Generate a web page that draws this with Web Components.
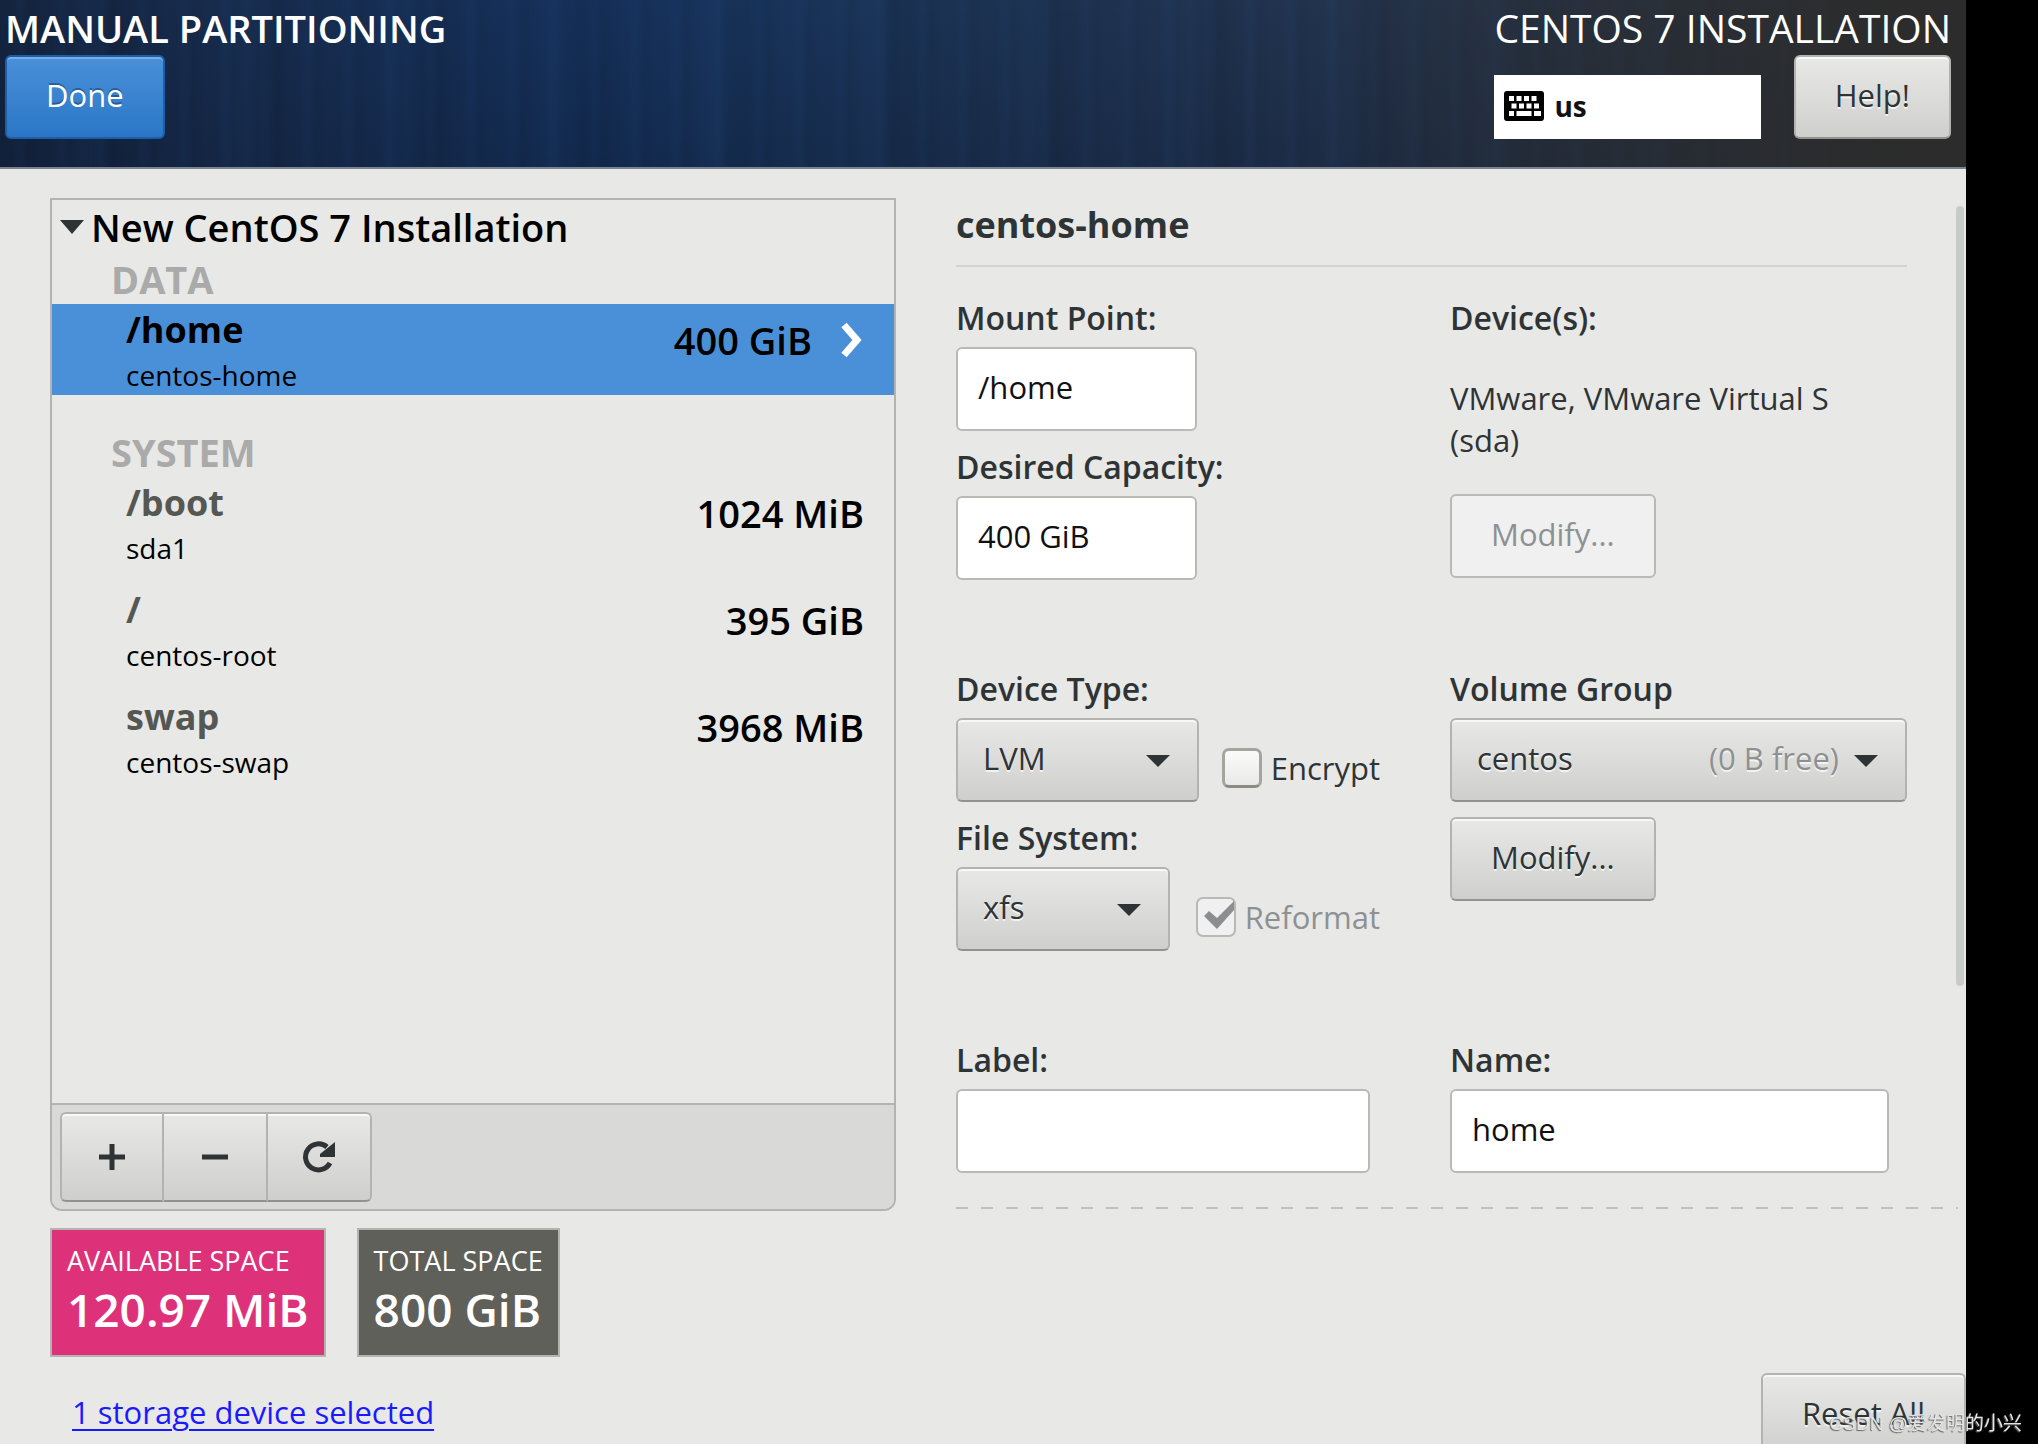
<!DOCTYPE html>
<html lang="en">
<head>
<meta charset="utf-8">
<title>Manual Partitioning</title>
<style>
*{box-sizing:border-box}
html{background:#000}
body{margin:0;min-height:100vh;overflow:hidden;background:#000;font-family:"Open Sans","Noto Sans",sans-serif;font-size:31px;line-height:42px;color:#2e3436}
</style>
</head>
<body>
<install-page></install-page>
<script>
const BASE = `*{box-sizing:border-box}button,input,select{font:inherit;color:inherit;margin:0}`;
const FACE = `border:2px solid #b3b3b0;border-bottom-color:#93938d;border-radius:6px;background:linear-gradient(#e8e8e6,#cfcfcd);box-shadow:inset 0 2px #f8f8f7;text-shadow:0 2px rgba(255,255,255,.7);`;
const LABEL = `label,.caption{display:block;margin-bottom:8px;font-size:32px;font-weight:600;white-space:nowrap}`;
let uid = 0;
function define(name, render) {
  customElements.define(name, class extends HTMLElement {
    connectedCallback() {
      if (this.shadowRoot) return;
      const t = document.createElement('template');
      t.innerHTML = render(a => this.getAttribute(a) || '', a => this.hasAttribute(a), 'f' + (++uid));
      this.attachShadow({mode: 'open'}).append(t.content.cloneNode(true));
    }
  });
}

define('push-button', (a, has) => `<style>${BASE}
:host{display:block;width:max-content}
button{display:block;height:84px;padding:0 39px 4px;white-space:nowrap;color:#2e3436;${FACE}}
:host([primary]) button{color:#fff;border-color:#1c5ea8;background:linear-gradient(#4a90d9,#2a76c6);box-shadow:inset 0 2px #79ade3;text-shadow:0 -2px rgba(0,0,0,.3)}
button:disabled{color:#8e9192;background:#f0f0f0;border-color:#b9b9b5;box-shadow:none;text-shadow:none}
</style><button type="button" ${has('disabled') ? 'disabled' : ''}><slot></slot></button>`);

define('text-field', (a, has, id) => `<style>${BASE}${LABEL}
:host{display:block}
input{display:block;width:100%;height:84px;padding:0 20px 4px;border:2px solid #b9b9b5;border-radius:6px;background:#fff;color:#111;outline:0}
</style><label for="${id}">${a('label')}</label><input id="${id}" type="text" value="${a('value')}">`);

define('select-field', (a, has, id) => `<style>${BASE}${LABEL}
:host{display:block}
.box{display:grid}
.box>*{grid-area:1/1}
select{appearance:none;width:100%;height:84px;padding:0 25px 4px;${FACE}}
.deco{display:flex;align-items:center;justify-content:flex-end;gap:15px;padding:0 29px 4px 0;pointer-events:none;color:#8e9192;text-shadow:0 2px rgba(255,255,255,.7)}
svg{width:24px;height:12px;margin-top:6px;fill:#2e3436}
</style><label for="${id}">${a('label')}</label><div class="box"><select id="${id}"><option>${a('value')}</option></select>
<div class="deco"><slot></slot><svg viewBox="0 0 24 12"><path d="M0 0h24L12 12z"/></svg></div></div>`);

define('check-field', (a, has, id) => `<style>${BASE}
:host{display:block}
label{display:flex;align-items:center;gap:9px}
.tick{display:grid}
.tick>*{grid-area:1/1}
input{appearance:none;width:40px;height:40px;border:3px solid #a5a59f;border-bottom-color:#8c8c84;border-radius:7px;background:linear-gradient(#fafafa,#e9e9e8)}
input:disabled{border:2px solid #b9b9b5;background:#f0f0f0}
svg{width:40px;height:40px;fill:#8b8e8f;pointer-events:none}
:host([disabled]){color:#8e9192}
</style><label for="${id}"><span class="tick"><input id="${id}" type="checkbox" ${has('checked') ? 'checked' : ''} ${has('disabled') ? 'disabled' : ''}>${has('checked') ? '<svg viewBox="0 0 40 40"><path d="M8 19l5-5 8 7L38 4v9L21 32z"/></svg>' : ''}</span><span><slot></slot></span></label>`);

define('page-header', () => `<style>${BASE}
:host{display:flex;justify-content:space-between;align-items:flex-start;height:169px;padding:5px 15px 0 5px;color:#fff;border-bottom:2px solid #7c8290;
background:
linear-gradient(90deg,rgba(44,44,44,0) 66%,#2c2c2c 97%),
repeating-linear-gradient(90deg,rgba(40,90,150,0) 0 12px,rgba(40,90,150,.05) 18px 22px,rgba(0,0,0,.03) 29px 33px,rgba(0,0,0,0) 41px),
repeating-linear-gradient(90deg,rgba(40,90,150,0) 0 60px,rgba(40,90,150,.05) 80px 91px,rgba(0,0,0,.05) 110px 121px,rgba(0,0,0,0) 157px),
linear-gradient(rgba(10,20,40,0),rgba(10,20,40,.25)),
linear-gradient(90deg,#14243f 0,#172c4e 12%,#15305a 30%,#18335b 38%,#1c3252 50%,#22334e 68%,#28323f 100%)}
h1,h2{margin:0 0 4px;font-size:38px;line-height:46px;font-weight:600}
h2{font-size:39px;font-weight:400}
.row{display:flex;align-items:flex-end;justify-content:space-between;gap:32px}
.kb{display:flex;align-items:center;gap:10px;width:267px;height:64px;padding:0 10px 2px;background:#fff;color:#111;font-weight:700;font-size:28px}
svg{width:40px;height:30px;display:block}
</style>
<div><h1>MANUAL PARTITIONING</h1><push-button primary>Done</push-button></div>
<div><h2>CENTOS 7 INSTALLATION</h2><div class="row"><div class="kb">
<svg viewBox="0 0 40 30"><rect width="40" height="30" rx="3"/><path fill="#fff" d="M5 5h5v5H5zM12.500 5h5v5h-5zM20 5h5v5h-5zM27.500 5h5v5h-5zM7.500 12.500h5v5h-5zM15 12.500h5v5h-5zM22.500 12.500h5v5h-5zM30 12.500h5v5h-5zM5 20h5v5H5zM12.500 20h15v5h-15zM30 20h7v5h-7z"/></svg><span>us</span></div><push-button>Help!</push-button></div></div>`);

define('partition-row', (a, has) => `<style>${BASE}
:host{display:flex;justify-content:space-between;height:91px;margin-bottom:16px;padding:0 30px 0 74px;color:#000}
.name{font-size:36px;line-height:52px;font-weight:700;color:#555753}
.dev{font-size:28px;line-height:38px}
.size{display:flex;align-items:center;gap:28px;height:71px;font-size:38px;font-weight:600}
:host([selected]){background:#4a90d9}
:host([selected]) .name{color:#000}
svg{width:24px;height:36px;fill:none;stroke:#fff;stroke-width:7}
</style><div><div class="name">${a('name')}</div><div class="dev">${a('device')}</div></div>
<div class="size"><slot></slot>${has('selected') ? '<svg viewBox="0 0 24 36"><path d="M4 3l13 15L4 33"/></svg>' : ''}</div>`);

define('partition-list', () => `<style>${BASE}
:host{display:flex;flex-direction:column;min-height:1013px;border:2px solid #b3b3b0;border-radius:0 0 12px 12px}
.tree{flex:1}
h2{display:flex;align-items:center;gap:7px;margin:0;padding-left:8px;font-size:38px;line-height:54px;font-weight:600;color:#000}
h2 svg{width:24px;height:14px;fill:#2e3436}
h3{margin:0;padding-left:59px;font-size:38px;line-height:50px;font-weight:700;color:#aaa}
.second{margin-top:32px}
.bar{display:flex;padding:7px 8px;height:106px;background:#d9d9d7;border-top:2px solid #b3b3b0;border-radius:0 0 10px 10px}
.bar button{display:grid;place-items:center;width:104px;height:90px;padding:0;${FACE}border-radius:0}
.bar button+button{border-left:0}
.bar button:first-child{border-radius:6px 0 0 6px}
.bar button:last-child{border-radius:0 6px 6px 0}
.bar svg{width:40px;height:40px;fill:none;stroke:#2e3436;stroke-width:5}
</style>
<div class="tree"><h2><svg viewBox="0 0 24 14"><path d="M0 0h24L12 14z"/></svg><span>New CentOS 7 Installation</span></h2>
<h3>DATA</h3><slot name="data"></slot><h3 class="second">SYSTEM</h3><slot name="system"></slot></div>
<div class="bar"><button type="button" aria-label="Add"><svg viewBox="0 0 40 40"><path d="M7 20h26M20 7v26"/></svg></button><button type="button" aria-label="Remove"><svg viewBox="0 0 40 40"><path d="M7 20h26"/></svg></button><button type="button" aria-label="Reload"><svg viewBox="0 0 40 40"><path d="M31 26a13 13 0 1 1-3-16"/><path fill="#2e3436" stroke="none" d="M36 5v15H21v-3l5-4z"/></svg></button></div>`);

define('space-box', a => `<style>${BASE}
:host{display:block;height:129px;padding:10px 15px;border:2px solid #b3b3b0;background:${a('tone')};color:#fff;white-space:nowrap}
.cap{font-size:27px;line-height:42px}
.val{font-size:46px;line-height:54px;font-weight:600}
</style><div class="cap">${a('caption')}</div><div class="val"><slot></slot></div>`);

define('device-form', () => `<style>${BASE}${LABEL}
:host{display:flex;min-width:0}
.pane{flex:1;min-width:0}
h2{margin:0 49px 30px 0;padding:5px 0 18px;font-size:36px;line-height:44px;font-weight:700;border-bottom:2px solid #d3d3d1}
.grid{display:grid;grid-template-columns:424fr 457fr;column-gap:70px;padding-right:49px;align-items:start}
.short{width:241px}
.stack{display:flex;flex-direction:column;gap:15px}
.mid{margin-top:88px}
.line{display:flex;align-items:flex-end;justify-content:space-between}
.line check-field{padding-bottom:13px}
.lvm{width:243px}.xfs{width:214px}
p{margin:38px 0 33px}
.label{margin-right:10px}.name{margin-right:18px}
hr{height:2px;margin:34px -2px 0 0;border:0;background:repeating-linear-gradient(90deg,#c0c0be 0 12px,transparent 12px 25px)}
.scroll{width:8px;height:780px;margin:8px 2px 0 0;border-radius:4px;background:#c9cbca}
</style>
<div class="pane"><h2>centos-home</h2>
<div class="grid"><div class="stack"><text-field class="short" label="Mount Point:" value="/home"></text-field><text-field class="short" label="Desired Capacity:" value="400 GiB"></text-field></div>
<div><div class="caption">Device(s):</div><p>VMware, VMware Virtual S<br>(sda)</p><push-button disabled>Modify...</push-button></div></div>
<div class="grid mid"><div class="stack"><div class="line"><select-field class="lvm" label="Device Type:" value="LVM"></select-field><check-field>Encrypt</check-field></div>
<div class="line"><select-field class="xfs" label="File System:" value="xfs"></select-field><check-field checked disabled>Reformat</check-field></div></div>
<div class="stack"><select-field label="Volume Group" value="centos">(0 B free)</select-field><push-button>Modify...</push-button></div></div>
<div class="grid mid"><text-field class="label" label="Label:"></text-field><text-field class="name" label="Name:" value="home"></text-field></div>
<hr></div><div class="scroll"></div>`);

define('install-page', () => `<style>${BASE}
:host{display:block;margin-right:72px;background:#e8e8e6}
main{display:grid;grid-template-columns:846fr 1010fr;column-gap:60px;padding:29px 0 0 50px}
.spaces{display:flex;gap:31px;margin-top:17px}
footer{display:flex;justify-content:space-between;align-items:flex-start;padding-left:72px;margin-top:16px}
a{display:block;margin-top:18px;color:#1a1aff;text-underline-offset:5px;text-decoration-thickness:2px}
.mark{position:fixed;right:16px;bottom:6px;font:19px/28px "Liberation Sans","Noto Sans CJK SC",sans-serif;color:#e4e4e4;text-shadow:-1px 1px 1px #666}
</style>
<page-header></page-header>
<main><section><partition-list>
<partition-row slot="data" selected name="/home" device="centos-home">400 GiB</partition-row>
<partition-row slot="system" name="/boot" device="sda1">1024 MiB</partition-row>
<partition-row slot="system" name="/" device="centos-root">395 GiB</partition-row>
<partition-row slot="system" name="swap" device="centos-swap">3968 MiB</partition-row>
</partition-list>
<div class="spaces"><space-box tone="#dd3279" caption="AVAILABLE SPACE">120.97 MiB</space-box><space-box tone="#5f6059" caption="TOTAL SPACE">800 GiB</space-box></div></section>
<device-form></device-form></main>
<footer><a href="#">1 storage device selected</a><push-button>Reset All</push-button></footer>
<div class="mark">CSDN @爱发明的小兴</div>`);
</script>
</body>
</html>
